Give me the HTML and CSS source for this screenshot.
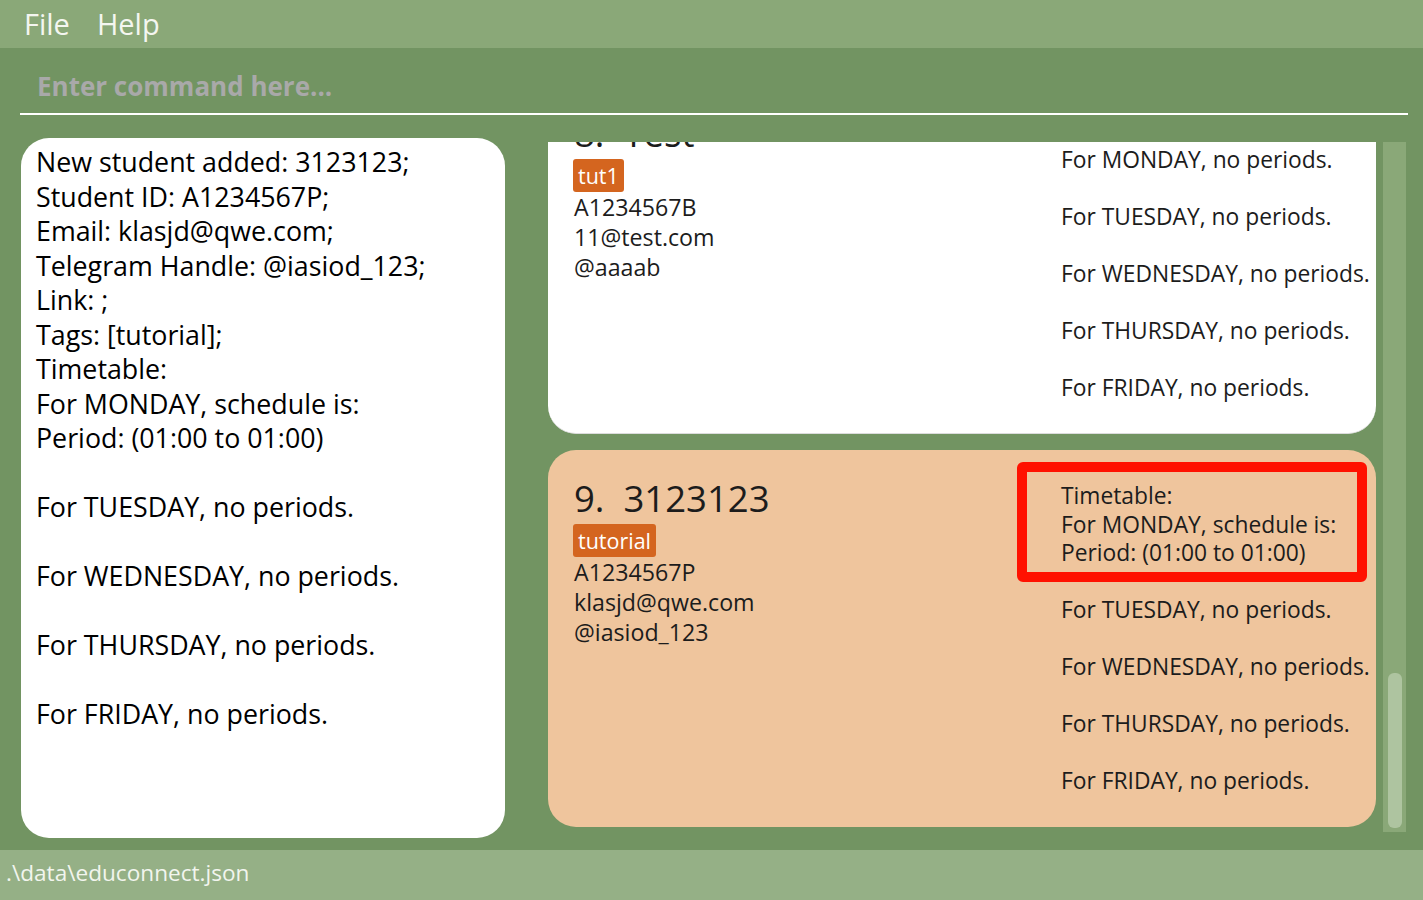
FILE: index.html
```html
<!DOCTYPE html>
<html>
<head>
<meta charset="utf-8">
<link rel="stylesheet" href="styles.css">
</head>
<body>
<div class="app">
  <div class="menubar">
    <span class="menu-item">File</span>
    <span class="menu-item">Help</span>
  </div>
  <div class="command">
    <div class="command-field">Enter command here...</div>
  </div>
  <div class="main">
    <div class="result">New student added: 3123123;
Student ID: A1234567P;
Email: klasjd@qwe.com;
Telegram Handle: @iasiod_123;
Link: ;
Tags: [tutorial];
Timetable:
For MONDAY, schedule is:
Period: (01:00 to 01:00)

For TUESDAY, no periods.

For WEDNESDAY, no periods.

For THURSDAY, no periods.

For FRIDAY, no periods.</div>
    <div class="list-area">
      <div class="list-viewport">
        <div class="list">
          <div class="card card-white">
            <div class="card-left">
              <div class="card-name">8.&nbsp;&nbsp;Test</div>
              <div class="tags"><span class="tag">tut1</span></div>
              <div class="detail">A1234567B</div>
              <div class="detail">11@test.com</div>
              <div class="detail">@aaaab</div>
            </div>
            <div class="card-right">Timetable:
For MONDAY, no periods.

For TUESDAY, no periods.

For WEDNESDAY, no periods.

For THURSDAY, no periods.

For FRIDAY, no periods.</div>
          </div>
          <div class="card card-peach">
            <div class="card-left">
              <div class="card-name">9.&nbsp;&nbsp;3123123</div>
              <div class="tags"><span class="tag">tutorial</span></div>
              <div class="detail">A1234567P</div>
              <div class="detail">klasjd@qwe.com</div>
              <div class="detail">@iasiod_123</div>
            </div>
            <div class="card-right">Timetable:
For MONDAY, schedule is:
Period: (01:00 to 01:00)

For TUESDAY, no periods.

For WEDNESDAY, no periods.

For THURSDAY, no periods.

For FRIDAY, no periods.</div>
            <div class="highlight"></div>
          </div>
        </div>
      </div>
      <div class="scrollbar">
        <div class="thumb"></div>
      </div>
    </div>
  </div>
  <div class="status">.\data\educonnect.json</div>
</div>
</body>
</html>
```

FILE: styles.css
```css
* { box-sizing: border-box; }
html, body {
  margin: 0;
  padding: 0;
  width: 1423px;
  height: 900px;
  overflow: hidden;
}
body {
  font-family: "Open Sans", "Noto Sans", sans-serif;
  background: #729462;
}
.app {
  display: flex;
  flex-direction: column;
  height: 900px;
}
.menubar {
  height: 48px;
  background: #8aa878;
  display: flex;
  align-items: center;
  padding-left: 24px;
  gap: 27px;
}
.menu-item {
  color: #f4f6f0;
  font-size: 29px;
  line-height: 48px;
}
.command {
  height: 67px;
  padding: 0 15px 0 20px;
}
.command-field {
  height: 67px;
  border-bottom: 2px solid #ffffff;
  color: #a9a9a9;
  font-weight: 700;
  font-size: 26px;
  padding-left: 17px;
  padding-top: 19px;
  line-height: 38px;
}
.main {
  flex: 1;
  display: flex;
  align-items: flex-start;
  padding-left: 21px;
}
.result {
  margin-top: 23px;
  width: 484px;
  height: 700px;
  background: #ffffff;
  border-radius: 28px;
  white-space: pre-line;
  color: #000;
  font-size: 26.8px;
  line-height: 34.5px;
  padding: 7px 0 0 15px;
}
.list-area {
  margin-top: 27px;
  margin-left: 43px;
  display: flex;
  gap: 7px;
  height: 690px;
}
.list-viewport {
  width: 828px;
  height: 690px;
  overflow: hidden;
}
.list {
  margin-top: -57px;
  display: flex;
  flex-direction: column;
  gap: 16px;
}
.card {
  position: relative;
  display: flex;
  border-radius: 28px;
  padding: 24px 0 0 26px;
  color: #1c1c1c;
}
.card-white {
  background: #ffffff;
  height: 348.5px;
  border-bottom: 1px solid #dcdcdc;
}
.card-peach {
  background: #efc59d;
  height: 377px;
}
.card-left {
  flex: 1;
}
.card-name {
  font-size: 36.5px;
  line-height: 48px;
}
.tags {
  margin-top: 2px;
  height: 33px;
}
.tag {
  display: inline-block;
  background: #d4651f;
  color: #ffffff;
  font-size: 21.5px;
  line-height: 33px;
  padding: 0 5px;
  border-radius: 3px;
  margin-left: -1px;
}
.detail {
  font-size: 23.2px;
  line-height: 30px;
}
.detail:first-of-type { margin-top: 1px; }
.card-right {
  width: 315px;
  padding-top: 8px;
  white-space: pre-line;
  font-size: 22.8px;
  line-height: 28.5px;
}
.card-peach .card-right {
  padding-top: 8.5px;
}
.highlight {
  position: absolute;
  left: 469px;
  top: 12px;
  width: 350px;
  height: 120px;
  border: 10px solid #ff1100;
  border-radius: 6px;
}
.scrollbar {
  width: 23px;
  height: 690px;
  background: #8aa878;
  display: flex;
  flex-direction: column;
  justify-content: flex-end;
  align-items: center;
  padding-bottom: 4px;
}
.thumb {
  width: 14px;
  height: 155px;
  background: #aec4a0;
  border-radius: 6px;
}
.status {
  height: 50px;
  background: #95b086;
  color: #f2f5ee;
  font-size: 22.6px;
  line-height: 46px;
  padding-left: 6px;
}
```
